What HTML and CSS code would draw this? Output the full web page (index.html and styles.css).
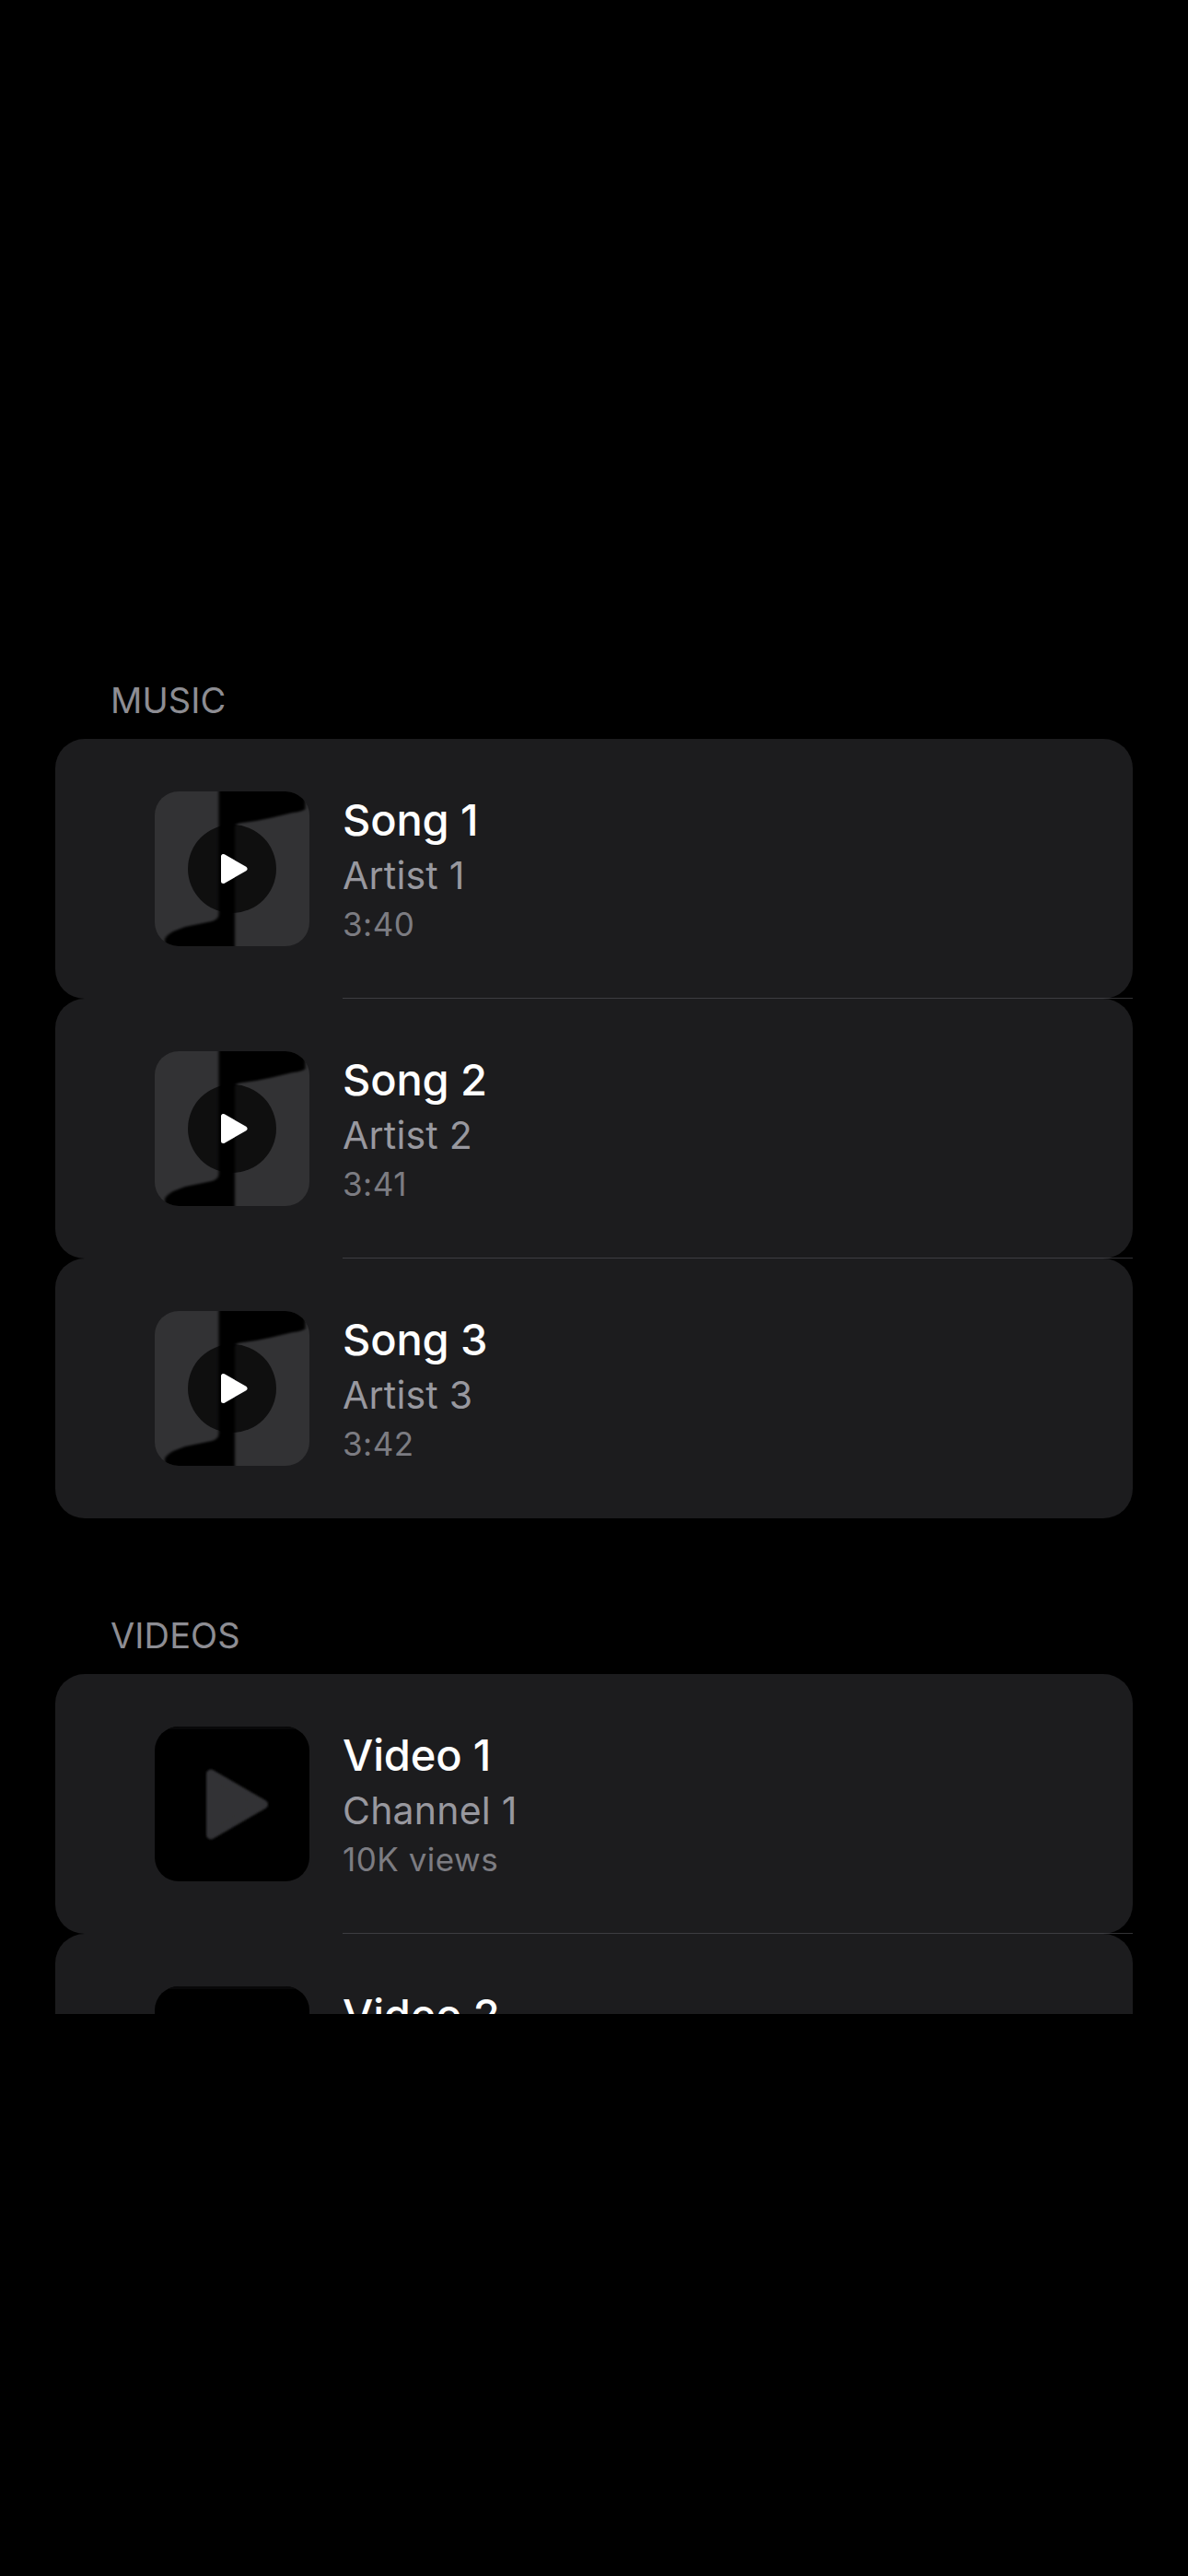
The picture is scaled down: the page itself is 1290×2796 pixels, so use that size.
FILE: index.html
```html
<!DOCTYPE html>
<html lang="en">
<head>
<meta charset="utf-8">
<title>Library</title>
<link rel="stylesheet" href="styles.css">
</head>
<body>
<svg class="defs" aria-hidden="true">
  <defs>
    <filter id="soft" x="-10%" y="-10%" width="120%" height="120%"><feGaussianBlur stdDeviation="1.3"/></filter>
    <filter id="soft-wide" x="-10%" y="-10%" width="120%" height="120%"><feGaussianBlur stdDeviation="1.8 1"/></filter>
    <symbol id="song-art" viewBox="0 0 168 168">
      <rect width="168" height="168" fill="#323234"/>
      <path d="M69.500-10H163.500V19Q160 22 150 23L125 29L110 32L92 34.500Q87 35.500 87 39V178H11V160Q13 156 20 152L33 147L50 143.500L62 141Q69.500 139 69.500 133Z" fill="#000" filter="url(#soft-wide)"/>
      <circle cx="84" cy="84" r="48" fill="#000" fill-opacity=".7"/>
      <path d="M74.500 70.500V97.500L98 84Z" fill="#fff" stroke="#fff" stroke-width="5" stroke-linejoin="round"/>
    </symbol>
    <symbol id="video-art" viewBox="0 0 168 168">
      <rect width="168" height="168" fill="#000"/>
      <rect width="168" height="3" fill="#080809"/>
      <path d="M61 51.500V117.500L118 84.500Z" fill="#323234" stroke="#323234" stroke-width="10" stroke-linejoin="round" filter="url(#soft)"/>
    </symbol>
  </defs>
</svg>
<main class="list">
  <section class="section">
    <h2 class="header">MUSIC</h2>
    <ul class="rows">
      <li class="row">
        <svg class="thumb"><use href="#song-art"/></svg>
        <div class="text"><p class="title">Song 1</p><p class="subtitle">Artist 1</p><p class="meta">3:40</p></div>
      </li>
      <li class="row">
        <svg class="thumb"><use href="#song-art"/></svg>
        <div class="text"><p class="title">Song 2</p><p class="subtitle">Artist 2</p><p class="meta">3:41</p></div>
      </li>
      <li class="row">
        <svg class="thumb"><use href="#song-art"/></svg>
        <div class="text"><p class="title">Song 3</p><p class="subtitle">Artist 3</p><p class="meta">3:42</p></div>
      </li>
    </ul>
  </section>
  <section class="section">
    <h2 class="header">VIDEOS</h2>
    <ul class="rows">
      <li class="row">
        <svg class="thumb"><use href="#video-art"/></svg>
        <div class="text"><p class="title">Video 1</p><p class="subtitle">Channel 1</p><p class="meta">10K views</p></div>
      </li>
      <li class="row">
        <svg class="thumb"><use href="#video-art"/></svg>
        <div class="text"><p class="title">Video 2</p></div>
      </li>
    </ul>
  </section>
</main>
</body>
</html>
```
FILE: styles.css
```css
* { box-sizing: border-box; margin: 0; padding: 0; }

body {
  height: 2796px;
  overflow: hidden;
  padding-top: 732px;
  background: #000;
  color: #fff;
  font-family: Inter, "Liberation Sans", sans-serif;
}

.defs { position: absolute; width: 0; height: 0; }

.list {
  display: flex;
  flex-direction: column;
  gap: 99px;
  height: 1454px;
  padding: 0 60px;
  overflow: hidden;
}

.header {
  height: 70px;
  padding-left: 60px;
  font-size: 38px;
  font-weight: 400;
  line-height: 56px;
  letter-spacing: 0.1px;
  color: #8d8d93;
}

.rows { list-style: none; }

.row {
  position: relative;
  display: flex;
  gap: 36px;
  height: 282px;
  padding: 57px 108px;
  border-radius: 32px;
  background: #1c1c1e;
}

.row:not(:last-child)::after {
  content: "";
  position: absolute;
  right: 0;
  bottom: 0;
  left: 312px;
  height: 1px;
  background: rgba(84, 84, 88, 0.6);
}

.thumb {
  flex: none;
  width: 168px;
  height: 168px;
  border-radius: 26px;
}

.text { white-space: nowrap; }

.title {
  padding-top: 2px;
  font-size: 47px;
  font-weight: 500;
  line-height: 58px;
  letter-spacing: -0.15px;
}

.subtitle {
  padding-top: 6px;
  font-size: 41px;
  line-height: 50px;
  letter-spacing: 0.2px;
  color: #98989f;
}

.meta {
  padding-top: 6px;
  font-size: 35px;
  line-height: 44px;
  letter-spacing: 0.5px;
  color: #7c7c82;
}
```
